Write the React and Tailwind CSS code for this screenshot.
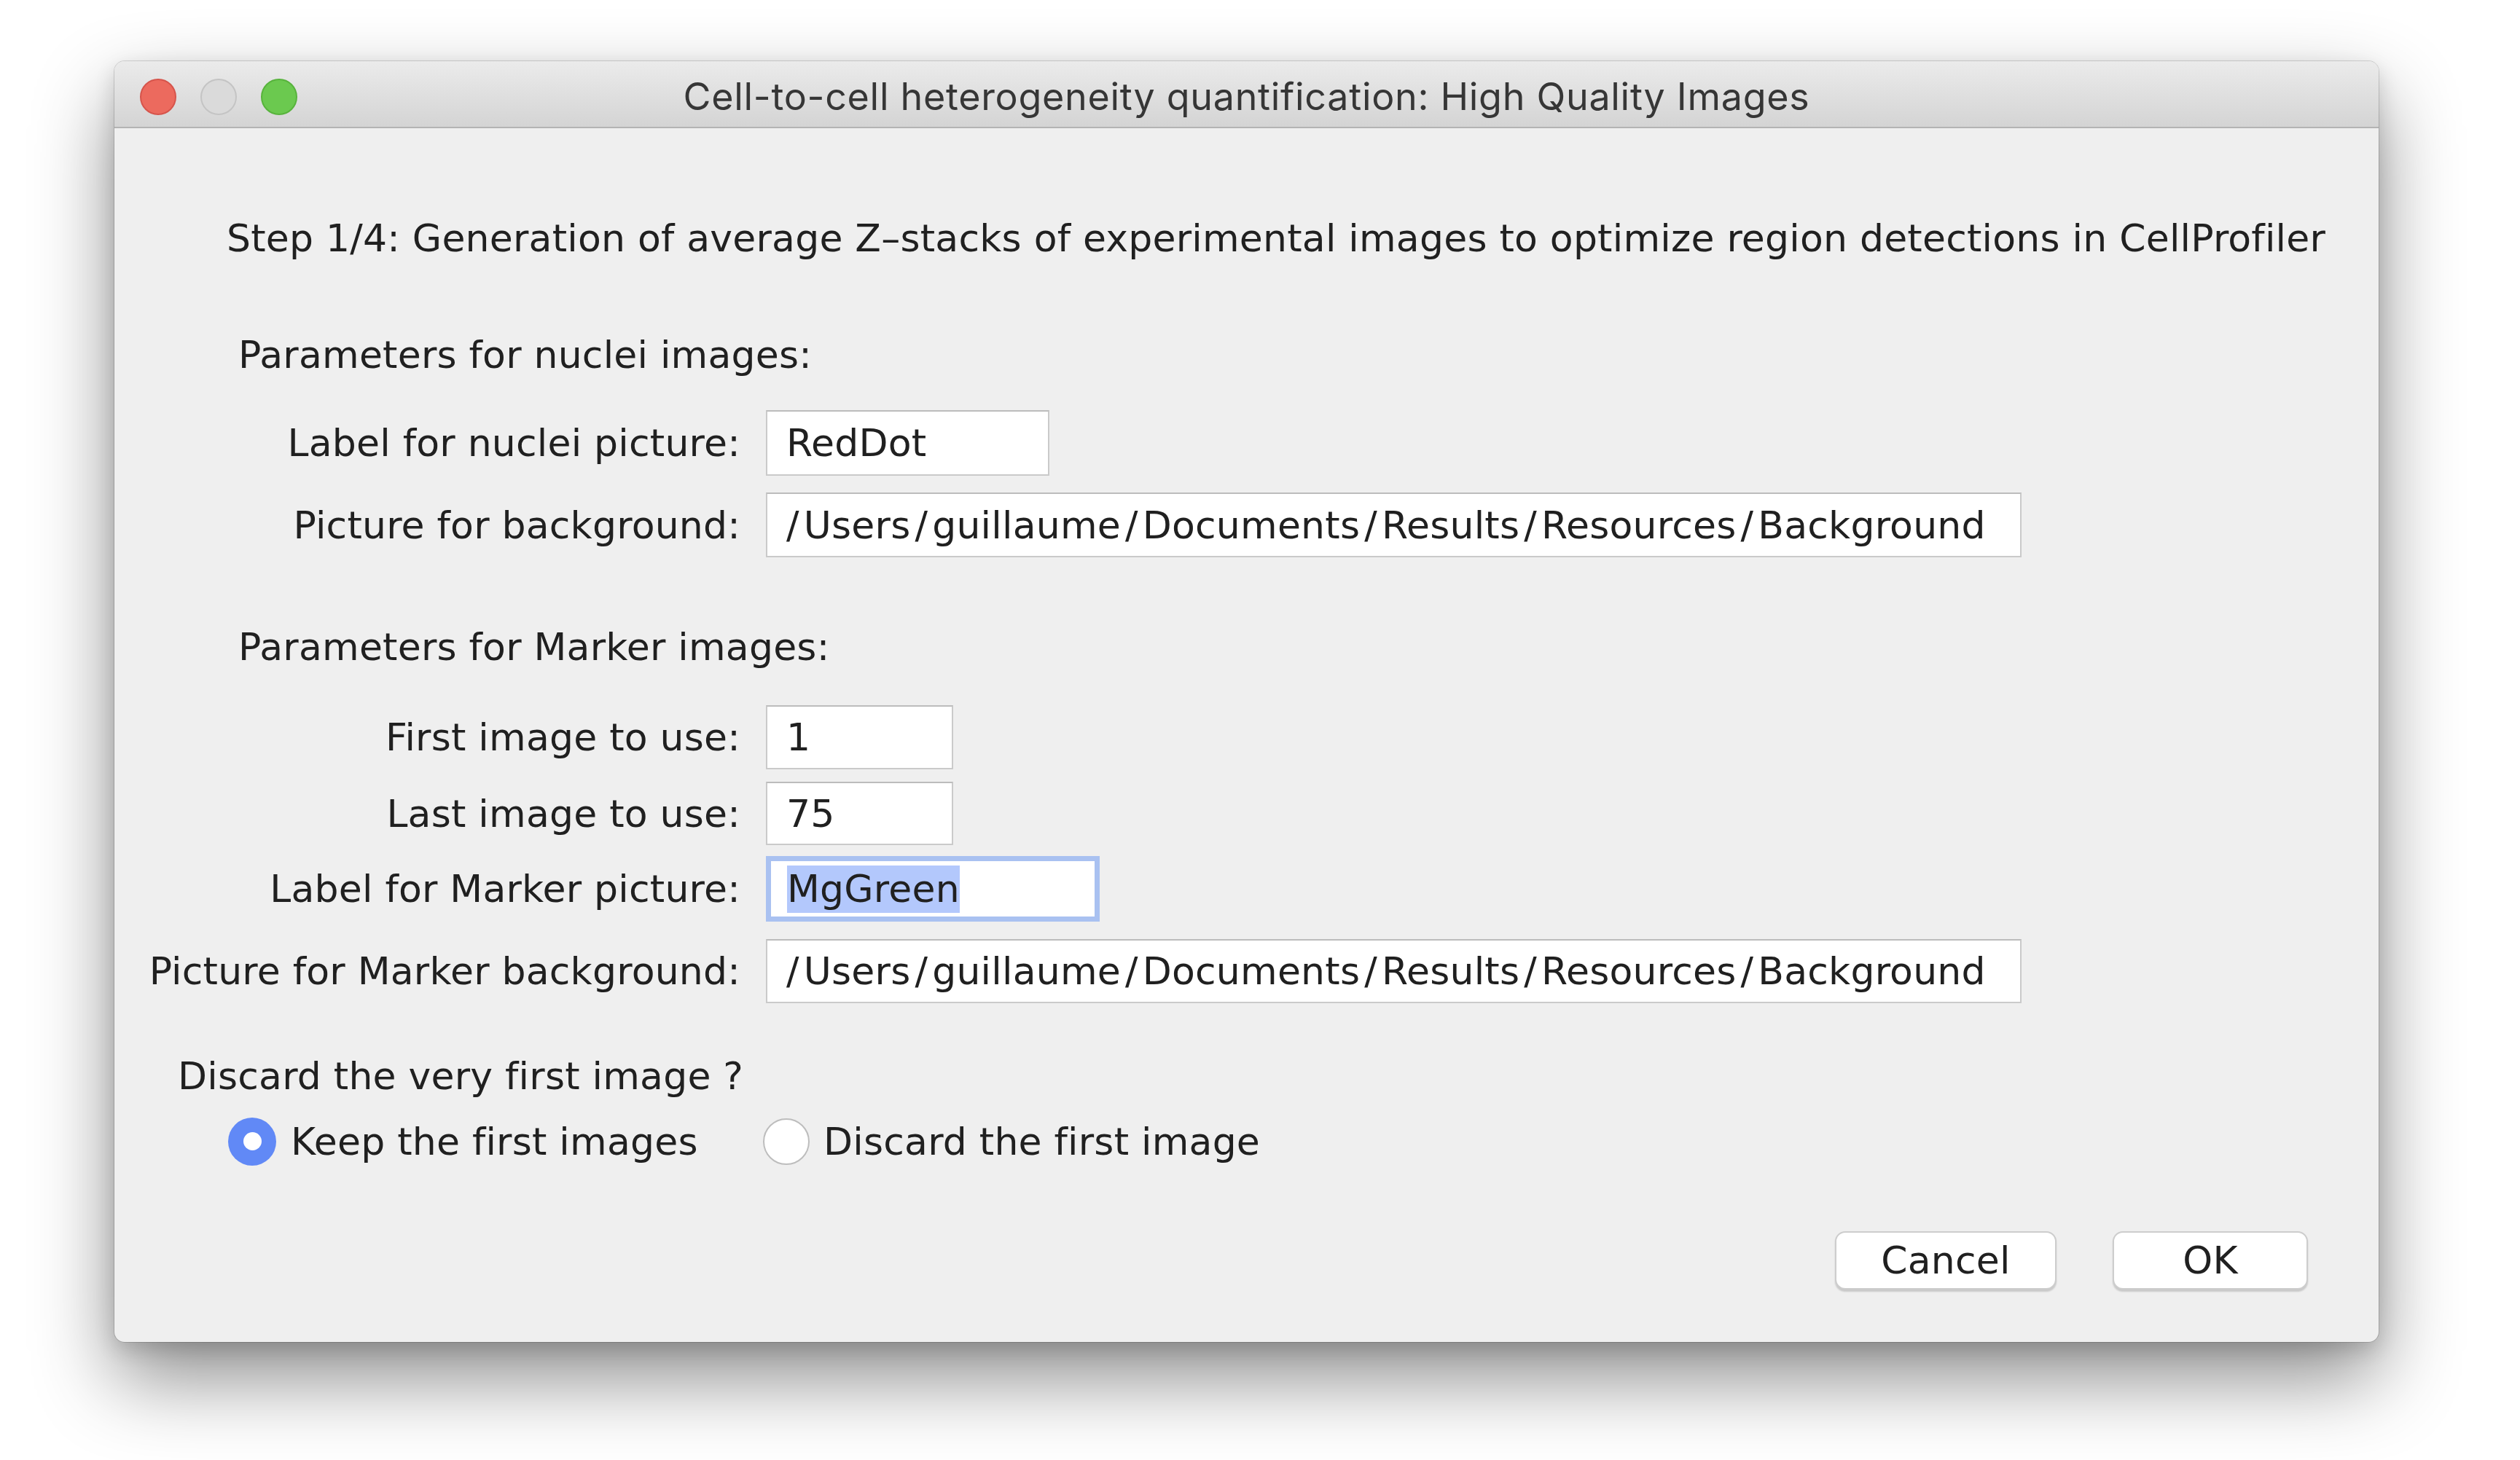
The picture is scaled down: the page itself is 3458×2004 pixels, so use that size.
import React from "react";

const BODY = "font-['DejaVu_Sans',sans-serif] text-[52px] leading-[64px] tracking-[0.22px] text-[#202020]";

function Row({ label, mt, children }) {
  return (
    <div className={`flex items-center ${mt}`}>
      <div className="w-[859px] shrink-0 text-right whitespace-nowrap">{label}</div>
      <div className="ml-[35px]">{children}</div>
    </div>
  );
}

function Field({ w, h, children }) {
  return (
    <div
      className={`${w} ${h} bg-white border-2 border-[#cacaca] border-t-[#bcbcbc] flex items-center pl-[26px] whitespace-nowrap`}
    >
      {children}
    </div>
  );
}

function Path() {
  const parts = ["Users", "guillaume", "Documents", "Results", "Resources", "Background"];
  return (
    <span className="whitespace-nowrap">
      {parts.map((p, i) => (
        <React.Fragment key={i}>
          <span className={i === 0 ? "pr-[6px]" : "px-[6px]"}>/</span>
          {p}
        </React.Fragment>
      ))}
    </span>
  );
}

export default function App() {
  return (
    <div className="w-[3458px] h-[2004px] bg-white overflow-hidden pt-[84px] pl-[157px]">
      <div className="w-[3107px] h-[1758px] rounded-[14px] overflow-hidden flex flex-col bg-[#efefef] shadow-[0_50px_110px_rgba(0,0,0,0.45),0_10px_28px_rgba(0,0,0,0.14),0_0_0_1px_rgba(0,0,0,0.14)]">
        {/* Title bar */}
        <div className="h-[92px] shrink-0 bg-gradient-to-b from-[#ebebeb] to-[#d4d4d4] border-b-2 border-[#b3b3b3] grid grid-cols-[1fr_auto_1fr] items-center pt-[8px]">
          <div className="flex items-center gap-[33px] pl-[35px]">
            <div className="w-[50px] h-[50px] rounded-full bg-[#ec6a5e] border-2 border-[#d6544b]" />
            <div className="w-[50px] h-[50px] rounded-full bg-[#dadada] border-2 border-[#c4c4c4]" />
            <div className="w-[50px] h-[50px] rounded-full bg-[#6bc94f] border-2 border-[#57b33c]" />
          </div>
          <div className="font-['Inter',sans-serif] text-[52px] leading-[64px] tracking-[0.7px] text-[#363636] whitespace-nowrap">
            Cell-to-cell heterogeneity quantification: High Quality Images
          </div>
          <div />
        </div>

        {/* Content */}
        <div className={`${BODY} flex flex-col flex-1`}>
          <div className="mt-[119px] ml-[154px] h-[64px] whitespace-nowrap">
            Step 1/4: Generation of average Z–stacks of experimental images to optimize region detections in CellProfiler
          </div>

          <div className="mt-[96px] ml-[170px] h-[64px] whitespace-nowrap">Parameters for nuclei images:</div>

          <Row label="Label for nuclei picture:" mt="mt-[44px]">
            <Field w="w-[389px]" h="h-[90px]">RedDot</Field>
          </Row>
          <Row label="Picture for background:" mt="mt-[23px]">
            <Field w="w-[1723px]" h="h-[89px]">
              <Path />
            </Field>
          </Row>

          <div className="mt-[91px] ml-[170px] h-[64px] whitespace-nowrap">Parameters for Marker images:</div>

          <Row label="First image to use:" mt="mt-[48px]">
            <Field w="w-[257px]" h="h-[88px]">1</Field>
          </Row>
          <Row label="Last image to use:" mt="mt-[17px]">
            <Field w="w-[257px]" h="h-[87px]">75</Field>
          </Row>
          <Row label="Label for Marker picture:" mt="mt-[15px]">
            <div className="w-[458px] h-[90px] bg-white border-[7px] border-[#a9c1f1] flex items-center pl-[22px]">
              <span className="bg-[#b3c8fc] h-[65px] leading-[65px] inline-block whitespace-nowrap">MgGreen</span>
            </div>
          </Row>
          <Row label="Picture for Marker background:" mt="mt-[24px]">
            <Field w="w-[1723px]" h="h-[88px]">
              <Path />
            </Field>
          </Row>

          <div className="mt-[68px] ml-[87px] h-[64px] whitespace-nowrap">Discard the very first image ?</div>

          <div className="mt-[24px] ml-[156px] flex items-center h-[67px]">
            <div className="w-[734px] flex items-center">
              <div className="w-[66px] h-[66px] rounded-full bg-[#6189f6] flex items-center justify-center shrink-0">
                <div className="w-[25px] h-[25px] rounded-full bg-white" />
              </div>
              <span className="ml-[20px] whitespace-nowrap">Keep the first images</span>
            </div>
            <div className="flex items-center">
              <div className="w-[64px] h-[64px] rounded-full bg-white border-2 border-[#bdbdbd] shrink-0" />
              <span className="ml-[19px] whitespace-nowrap">Discard the first image</span>
            </div>
          </div>

          <div className="mt-[90px] flex justify-end pr-[97px] gap-[77px]">
            <div className="w-[304px] h-[80px] rounded-[14px] bg-white border-2 border-[#cdcdcd] shadow-[0_3px_2px_rgba(0,0,0,0.16)] flex items-center justify-center">
              Cancel
            </div>
            <div className="w-[268px] h-[80px] rounded-[14px] bg-white border-2 border-[#cdcdcd] shadow-[0_3px_2px_rgba(0,0,0,0.16)] flex items-center justify-center">
              OK
            </div>
          </div>
        </div>
      </div>
    </div>
  );
}
